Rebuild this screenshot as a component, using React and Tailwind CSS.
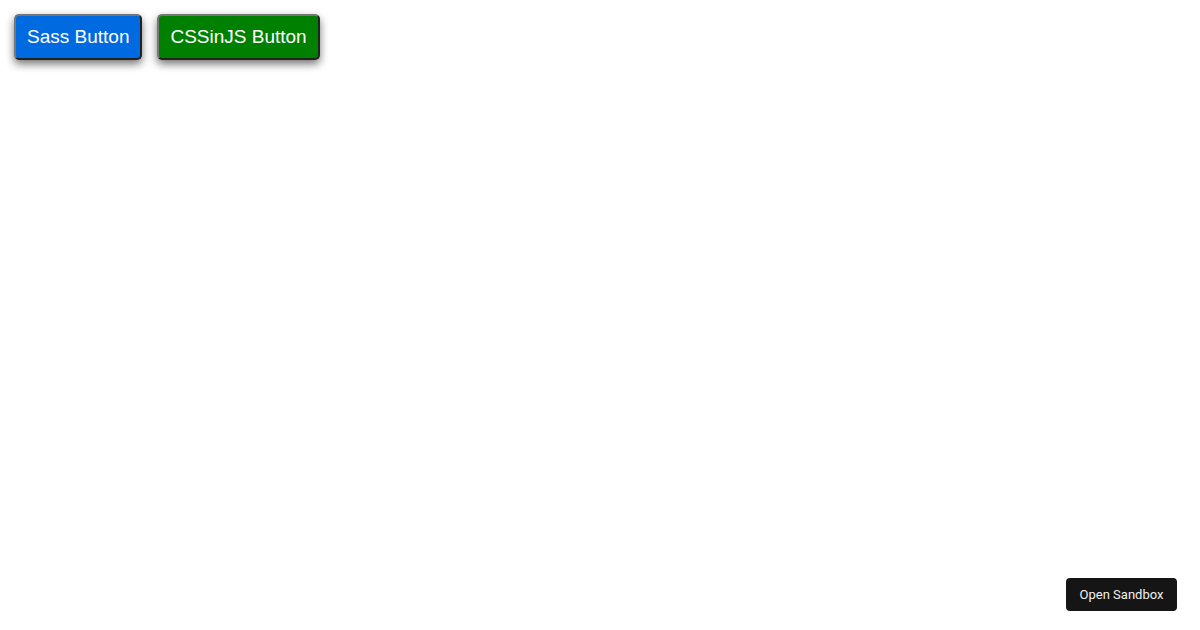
export default function App() {
  return (
    <div className="w-[1200px] h-[630px] bg-white relative" style={{ fontFamily: '"Liberation Sans", Arial, sans-serif' }}>
      <div className="flex gap-[15px] pl-[14px] pt-[14px]">
        <button className="h-[46px] px-[11px] rounded-[5px] border-2 border-t-[#767676] border-l-[#767676] border-r-[#222] border-b-[#222] bg-[#006ae0] text-white text-[19px] shadow-[0_4px_8px_rgba(0,0,0,0.55)]">
          Sass Button
        </button>
        <button className="h-[46px] px-[11px] rounded-[5px] border-2 border-t-[#767676] border-l-[#767676] border-r-[#222] border-b-[#222] bg-[#008000] text-white text-[19px] shadow-[0_4px_8px_rgba(0,0,0,0.55)]">
          CSSinJS Button
        </button>
      </div>
      <div className="absolute left-[1066px] top-[578px] w-[111px] h-[33px] rounded-[4px] bg-[#151515] text-[#f0f0f0] text-[13px] flex items-center justify-center" style={{ fontFamily: 'Roboto, "Liberation Sans", sans-serif' }}>
        Open Sandbox
      </div>
    </div>
  );
}
